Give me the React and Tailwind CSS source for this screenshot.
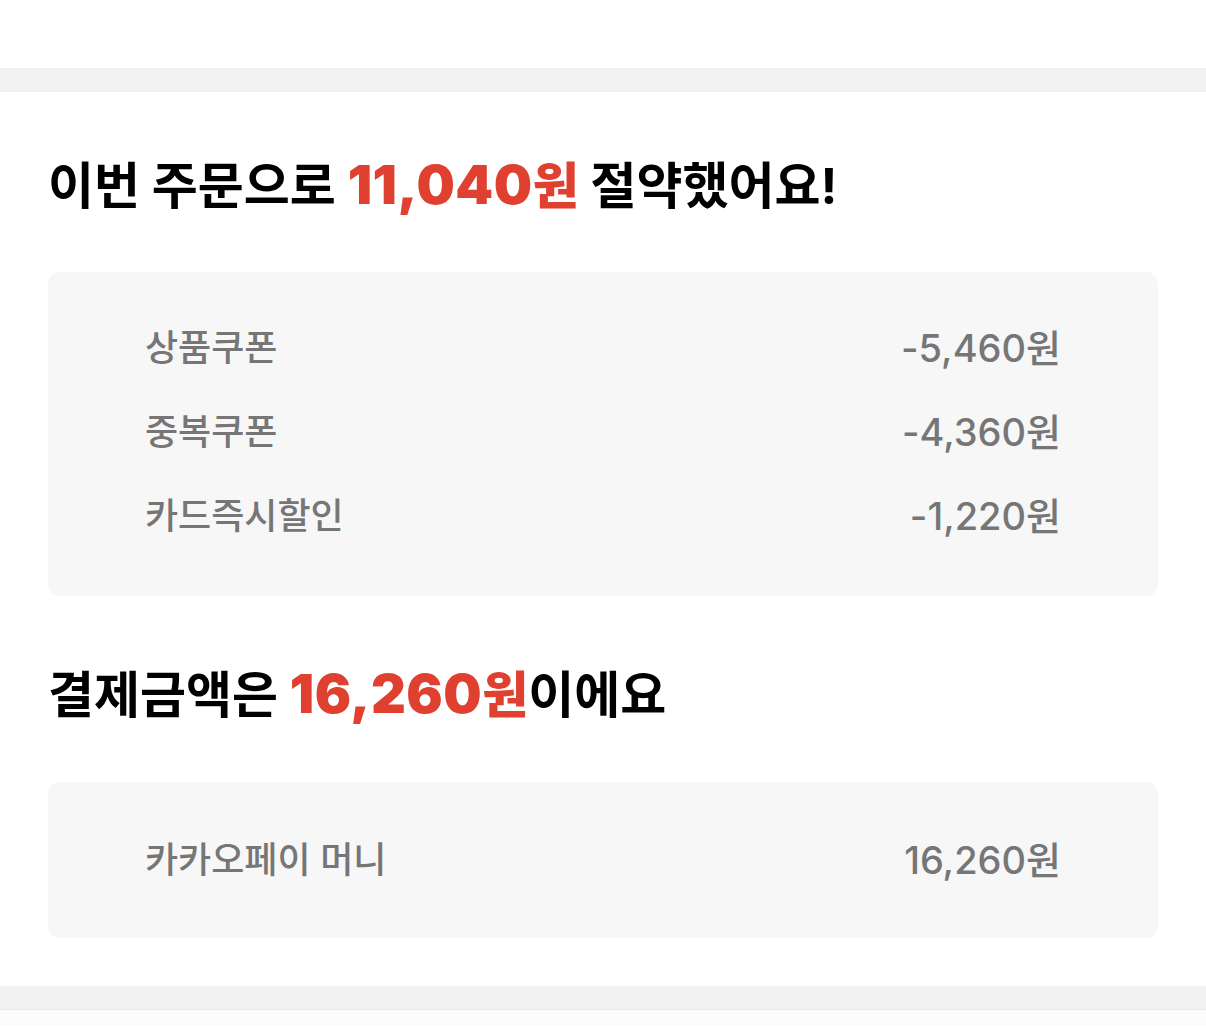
const kr = '[font-family:Inter,"Noto_Sans_CJK_KR",sans-serif]';

const savings = [
  { label: '상품쿠폰', amount: '-5,460원' },
  { label: '중복쿠폰', amount: '-4,360원' },
  { label: '카드즉시할인', amount: '-1,220원' },
];

function Row({ label, amount }) {
  return (
    <div className="flex h-[84px] items-center justify-between">
      <span className="text-[36px] font-medium text-[#767676]">{label}</span>
      <span className="text-[38px] font-medium text-[#767676]">{amount}</span>
    </div>
  );
}

function Amount({ children }) {
  return (
    <span className="text-[#e0402f]">
      <span className="text-[54px] font-black tracking-[0.5px]">{children}</span>
      <span className="font-extrabold">원</span>
    </span>
  );
}

export default function App() {
  return (
    <div className={`min-h-[1027px] bg-white ${kr}`}>
      <div className="h-[68px] bg-white" />
      <div className="h-6 bg-[#f2f2f2]" />

      <section className="px-12 pt-[63px] pb-12">
        <h2 className="h-[60px] text-[50px] leading-[60px] font-bold whitespace-nowrap text-black">
          이번 주문으로 <Amount>11,040</Amount> 절약했어요!
        </h2>

        <div className="mt-[57px] rounded-xl bg-[#f7f7f7] px-[97px] pt-[34px] pb-[38px]">
          {savings.map((s) => (
            <Row key={s.label} label={s.label} amount={s.amount} />
          ))}
        </div>

        <h2 className="mt-[68px] h-[60px] text-[50px] leading-[60px] font-bold whitespace-nowrap text-black">
          결제금액은 <Amount>16,260</Amount>이에요
        </h2>

        <div className="mt-[58px] rounded-xl bg-[#f7f7f7] px-[97px] py-9">
          <Row label="카카오페이 머니" amount="16,260원" />
        </div>
      </section>

      <div className="h-6 border-b border-[#e9e9e9] bg-[#f2f2f2]" />
      <div className="h-4 bg-[#fcfcfc]" />
    </div>
  );
}
